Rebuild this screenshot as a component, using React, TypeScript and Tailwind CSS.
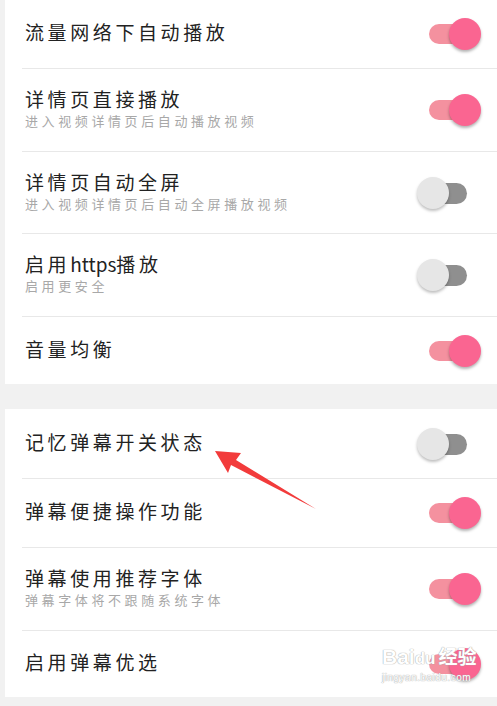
import React from 'react';

type Item = {
  title: React.ReactNode;
  sub?: string;
  on: boolean;
};

const groupOne: Item[] = [
  { title: '流量网络下自动播放', on: true },
  { title: '详情页直接播放', sub: '进入视频详情页后自动播放视频', on: true },
  { title: '详情页自动全屏', sub: '进入视频详情页后自动全屏播放视频', on: false },
  {
    title: (
      <>
        启用<span className="tracking-normal">https</span>播放
      </>
    ),
    sub: '启用更安全',
    on: false,
  },
  { title: '音量均衡', on: true },
];

const groupTwo: Item[] = [
  { title: '记忆弹幕开关状态', on: false },
  { title: '弹幕便捷操作功能', on: true },
  { title: '弹幕使用推荐字体', sub: '弹幕字体将不跟随系统字体', on: true },
  { title: '启用弹幕优选', on: true },
];

const Toggle: React.FC<{ on: boolean }> = ({ on }) => (
  <div className="relative w-[64px] h-[32px] shrink-0">
    <div
      className={
        on
          ? 'absolute left-[12px] top-[6px] w-[40px] h-[20px] rounded-full bg-[#f4919f]'
          : 'absolute left-[12px] top-[6px] w-[38px] h-[21px] rounded-full bg-[#8f8f8f]'
      }
    />
    <div
      className={
        on
          ? 'absolute right-0 top-0 w-[32px] h-[32px] rounded-full bg-[#fa6591] shadow-[0_2px_3px_rgba(0,0,0,0.3)]'
          : 'absolute left-0 top-0 w-[32px] h-[32px] rounded-full bg-[#e6e6e6] shadow-[0_2px_3px_rgba(0,0,0,0.25)]'
      }
    />
  </div>
);

const Row: React.FC<{ item: Item; last: boolean; h: string }> = ({ item, last, h }) => (
  <div className={`ml-[17px] flex items-center pr-[16px] ${h} ${last ? '' : 'border-b border-[#e8e8e8]'}`}>
    <div className="flex-1 pl-[3px] pb-[4px]">
      <div className="text-[19px] leading-[26px] tracking-[3.6px] text-[#222222]">{item.title}</div>
      {item.sub && (
        <div className="text-[13px] leading-[18px] tracking-[3.6px] text-[#a8a8a8]">{item.sub}</div>
      )}
    </div>
    <Toggle on={item.on} />
  </div>
);

const heightsOne = ['h-[69px]', 'h-[83px]', 'h-[82px]', 'h-[83px]', 'h-[67px]'];
const heightsTwo = ['h-[70px]', 'h-[69px]', 'h-[83px]', 'h-[66px]'];

export default function App() {
  return (
    <div
      className="relative w-full h-[706px] overflow-hidden bg-[#f1f1f1] pl-[5px]"
      style={{ fontFamily: '"Noto Sans CJK SC", "Noto Sans", sans-serif' }}
    >
      <div className="bg-white">
        {groupOne.map((item, i) => (
          <Row key={i} item={item} h={heightsOne[i]} last={i === groupOne.length - 1} />
        ))}
      </div>
      <div className="h-[25px]" />
      <div className="bg-white">
        {groupTwo.map((item, i) => (
          <Row key={i} item={item} h={heightsTwo[i]} last={i === groupTwo.length - 1} />
        ))}
      </div>

      {/* annotation arrow */}
      <svg className="absolute left-0 top-0 pointer-events-none" width="497" height="706">
        <polygon
          points="215,451 241,453 236,460 316,509 231,465 228,473"
          fill="#f23b3b"
        />
      </svg>

      {/* watermark */}
      <div className="absolute left-[382px] top-[646px] pointer-events-none select-none text-white [text-shadow:0_0_1px_#a8a8a8,0_0_1px_#a8a8a8]">
        <div className="flex items-end leading-none" style={{ fontFamily: '"Liberation Sans", "Noto Sans CJK SC", sans-serif' }}>
          <span className="text-[21px] font-bold">Bai</span>
          <span className="text-[17px] font-bold">du</span>
          <span className="ml-[3px] text-[19px] font-bold">经验</span>
        </div>
        <div className="mt-[6px] text-[10px] leading-none tracking-[0.5px]" style={{ fontFamily: '"Liberation Sans", sans-serif' }}>
          jingyan.baidu.com
        </div>
      </div>
    </div>
  );
}
